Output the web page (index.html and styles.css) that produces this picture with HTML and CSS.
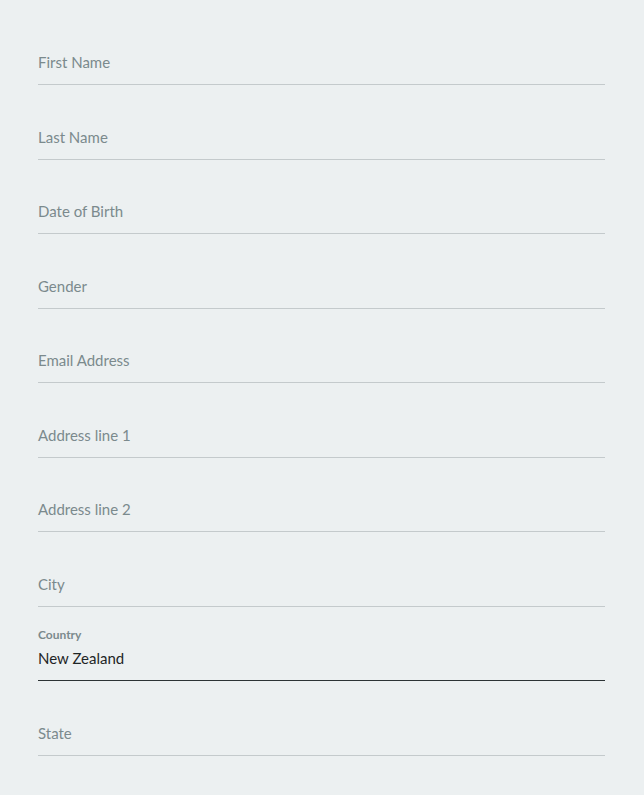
FILE: index.html
```html
<!DOCTYPE html>
<html>
<head>
<meta charset="utf-8">
<link rel="stylesheet" href="styles.css">
</head>
<body>
<form class="form">
  <div class="field"><div class="input placeholder">First Name</div></div>
  <div class="field"><div class="input placeholder">Last Name</div></div>
  <div class="field"><div class="input placeholder">Date of Birth</div></div>
  <div class="field"><div class="input placeholder">Gender</div></div>
  <div class="field"><div class="input placeholder">Email Address</div></div>
  <div class="field"><div class="input placeholder">Address line 1</div></div>
  <div class="field"><div class="input placeholder">Address line 2</div></div>
  <div class="field"><div class="input placeholder">City</div></div>
  <div class="field filled"><span class="label">Country</span><div class="input value">New Zealand</div></div>
  <div class="field"><div class="input placeholder">State</div></div>
</form>
</body>
</html>
```
FILE: styles.css
```css
html, body {
  margin: 0;
  padding: 0;
  background: #ecf0f1;
}
body {
  font-family: Lato, "Open Sans", sans-serif;
  width: 644px;
  height: 795px;
  overflow: hidden;
}
.form {
  padding: 10.44px 39px 0 38px;
  display: flex;
  flex-direction: column;
}
.field {
  height: 74.56px;
  box-sizing: border-box;
  display: flex;
  flex-direction: column;
  justify-content: flex-end;
  border-bottom: 1px solid #c4cacc;
}
.input {
  font-size: 15px;
  line-height: 20px;
  padding-bottom: 12px;
}
.placeholder {
  color: #7b8a8d;
}
.filled {
  border-bottom-color: #2c3335;
}
.label {
  font-size: 12px;
  font-weight: bold;
  color: #7b8a8d;
  line-height: 14px;
  margin-bottom: 6px;
}
.value {
  color: #1e2526;
}
```
